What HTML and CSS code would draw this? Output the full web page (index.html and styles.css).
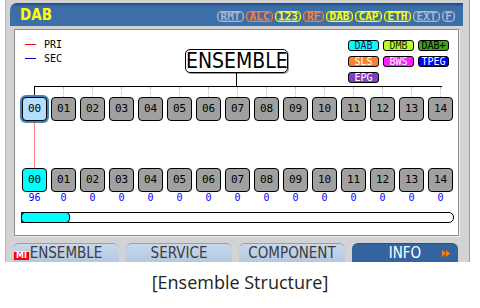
FILE: index.html
```html
<!DOCTYPE html>
<html lang="en">
<head>
    <meta charset="UTF-8">
    <meta name="viewport" content="width=device-width, initial-scale=1.0">
    <title>Ensemble Structure</title>
    <link rel="stylesheet" href="styles.css">
</head>
<body>
    <div class="device">
        <!-- Title bar with status flags -->
        <div class="titlebar">
            <span class="title">DAB</span>
            <ul class="status">
                <li class="off">RMT</li>
                <li class="warn">ALC</li>
                <li class="on w26">123</li>
                <li class="warn w21">RF</li>
                <li class="on">DAB</li>
                <li class="on">CAP</li>
                <li class="on">ETH</li>
                <li class="off">EXT</li>
                <li class="off w13">F</li>
            </ul>
        </div>

        <!-- Ensemble tree -->
        <div class="panel">
            <div class="top">
                <div class="legend">
                    <div class="legend-row"><span class="swatch pri"></span>PRI</div>
                    <div class="legend-row"><span class="swatch sec"></span>SEC</div>
                </div>
                <div class="root">
                    <div class="ensemble">ENSEMBLE</div>
                    <div class="stem"></div>
                </div>
                <div class="tags">
                    <span class="tag dab">DAB</span>
                    <span class="tag dmb">DMB</span>
                    <span class="tag dabplus">DAB+</span>
                    <span class="tag sls">SLS</span>
                    <span class="tag bws">BWS</span>
                    <span class="tag tpeg">TPEG</span>
                    <span class="tag epg">EPG</span>
                </div>
            </div>
            <div class="bus"></div>
            <div class="row">
                <div class="cell"><div class="drop first"></div><div class="box selected">00</div></div>
                <div class="cell"><div class="drop"></div><div class="box">01</div></div>
                <div class="cell"><div class="drop"></div><div class="box">02</div></div>
                <div class="cell"><div class="drop"></div><div class="box">03</div></div>
                <div class="cell"><div class="drop"></div><div class="box">04</div></div>
                <div class="cell"><div class="drop"></div><div class="box">05</div></div>
                <div class="cell"><div class="drop"></div><div class="box">06</div></div>
                <div class="cell"><div class="drop"></div><div class="box">07</div></div>
                <div class="cell"><div class="drop"></div><div class="box">08</div></div>
                <div class="cell"><div class="drop"></div><div class="box">09</div></div>
                <div class="cell"><div class="drop"></div><div class="box">10</div></div>
                <div class="cell"><div class="drop"></div><div class="box">11</div></div>
                <div class="cell"><div class="drop"></div><div class="box">12</div></div>
                <div class="cell"><div class="drop"></div><div class="box">13</div></div>
                <div class="cell"><div class="drop"></div><div class="box">14</div></div>
            </div>
            <div class="link"><span></span></div>
            <div class="row">
                <div class="box active">00</div>
                <div class="box">01</div>
                <div class="box">02</div>
                <div class="box">03</div>
                <div class="box">04</div>
                <div class="box">05</div>
                <div class="box">06</div>
                <div class="box">07</div>
                <div class="box">08</div>
                <div class="box">09</div>
                <div class="box">10</div>
                <div class="box">11</div>
                <div class="box">12</div>
                <div class="box">13</div>
                <div class="box">14</div>
            </div>
            <div class="row counts">
                <span>96</span><span>0</span><span>0</span><span>0</span><span>0</span>
                <span>0</span><span>0</span><span>0</span><span>0</span><span>0</span>
                <span>0</span><span>0</span><span>0</span><span>0</span><span>0</span>
            </div>
            <div class="scroll"><div class="thumb"></div></div>
        </div>

        <!-- Bottom tabs -->
        <div class="tabs">
            <div class="tab"><span class="mi">MI</span>ENSEMBLE</div>
            <div class="tab">SERVICE</div>
            <div class="tab">COMPONENT</div>
            <div class="tab current">INFO
                <svg class="arrow" width="8" height="7" viewBox="0 0 8 7">
                    <polygon points="0,0 4,3.5 0,7" fill="#ff8000"/>
                    <polygon points="4,0 8,3.5 4,7" fill="#ff8000"/>
                </svg>
            </div>
        </div>
    </div>

    <p class="caption">[Ensemble Structure]</p>
</body>
</html>
```

FILE: styles.css
```css
* {
    margin: 0;
    padding: 0;
    box-sizing: border-box;
}

body {
    width: 480px;
    height: 308px;
    overflow: hidden;
    background-color: #fff;
    font-family: "DejaVu Sans Mono", monospace;
}

.device {
    margin-left: 5px;
    width: 465px;
    height: 262px;
    padding: 3px 0 0 4px;
    background-color: #d3d3d3;
    border-left: 1px solid #b8b8b8;
    border-right: 1px solid #9c9c9c;
}

/* Title bar */
.titlebar {
    display: flex;
    align-items: center;
    width: 453px;
    height: 23px;
    padding-left: 10px;
    border-radius: 7px 0 0 0;
    background: linear-gradient(#1f4a84, #3c6ea8 4px, #3c6ea8);
}

.title {
    color: #ffff00;
    font: bold 15px "Liberation Sans Narrow", "DejaVu Sans Condensed", sans-serif;
}

.status {
    display: flex;
    gap: 2px;
    margin: 4px 8px 0 auto;
    list-style-type: none;
}

.status li {
    width: 27px;
    height: 11px;
    border: 1px solid;
    border-radius: 4px;
    box-shadow: inset 0 0 0 1px color-mix(in srgb, currentColor 35%, transparent);
    font: bold 11px/9px "DejaVu Sans Mono", monospace;
    text-align: center;
}

.status li.w26 { width: 26px; }
.status li.w21 { width: 21px; }
.status li.w13 { width: 13px; }

.status .off { color: #a8b8cc; }
.status .warn { color: #ff7f27; }
.status .on { color: #ffff00; }

/* Tree panel */
.panel {
    width: 445px;
    height: 207px;
    margin: 3px 0 0 4px;
    background-color: #fff;
    border: 1px solid #8c8c8c;
    box-shadow: 1px 1px 0 #efefef;
}

.top {
    display: grid;
    grid-template-columns: 1fr auto 1fr;
    height: 56px;
}

.legend {
    padding: 7px 0 0 10px;
    font-size: 10px;
}

.legend-row {
    display: flex;
    align-items: center;
    gap: 8px;
    height: 14px;
}

.swatch {
    width: 11px;
    height: 1px;
}

.swatch.pri { background-color: #ff0000; }
.swatch.sec { background-color: #0000cc; }

.root {
    display: flex;
    flex-direction: column;
    align-items: center;
    padding-top: 19px;
}

.ensemble {
    width: 103px;
    height: 24px;
    border: 1px solid #000;
    border-radius: 5px;
    box-shadow: 1px 1px 0 #9a9a9a;
    font: 21px/22px "Liberation Sans Narrow", "DejaVu Sans Condensed", sans-serif;
    text-align: center;
}

.stem {
    width: 1px;
    height: 13px;
    background-color: #000;
}

.tags {
    display: grid;
    grid-template-columns: repeat(3, 31px);
    gap: 5px 4px;
    align-content: start;
    justify-self: end;
    margin-right: 9px;
    padding-top: 10px;
}

.tag {
    height: 11px;
    border: 1px solid #000;
    border-radius: 3px;
    font-size: 10px;
    line-height: 9px;
    text-align: center;
    color: #fff;
}

.tag.dab { background-color: #00ffff; color: #10205a; }
.tag.dmb { background-color: #b8ff2a; color: #1a2a00; }
.tag.dabplus { background-color: #3f9f1f; color: #000; }
.tag.sls { background-color: #ff8030; }
.tag.bws { background-color: #ff1eff; }
.tag.tpeg { background-color: #0000ff; }
.tag.epg { background-color: #8040c0; }

.bus {
    width: 408px;
    height: 1px;
    margin-left: 19px;
    background-color: #000;
}

.row {
    display: grid;
    grid-template-columns: repeat(15, 25px);
    column-gap: 4px;
    margin-left: 7px;
}

.drop {
    width: 1px;
    height: 10px;
    margin: 0 auto;
    border-left: 1px dotted #b4b4b4;
}

.drop.first {
    border-left: 1px solid #000;
}

.box {
    height: 24px;
    border: 1px solid #000;
    border-radius: 4px;
    background-color: #a0a0a0;
    font-size: 11px;
    line-height: 22px;
    text-align: center;
}

.box.selected {
    background-color: #b3e0ff;
    box-shadow: 0 0 0 2px #4682b8;
}

.box.active {
    background-color: #00ffff;
}

.link {
    height: 47px;
}

.link span {
    display: block;
    width: 1px;
    height: 100%;
    margin-left: 19px;
    background-color: #ff8080;
}

.counts {
    height: 12px;
    color: #0000ff;
    font-size: 10px;
    line-height: 12px;
    text-align: center;
}

.scroll {
    width: 433px;
    height: 11px;
    margin: 8px 0 0 6px;
    border: 1px solid #000;
    border-radius: 0 5px 5px 0;
}

.thumb {
    width: 49px;
    height: 11px;
    margin: -1px 0 0 -1px;
    background-color: #00ffff;
    border: 1px solid #000;
    border-radius: 4px;
}

/* Tabs */
.tabs {
    display: grid;
    grid-template-columns: repeat(4, 106px);
    column-gap: 7px;
    height: 19px;
    margin: 7px 0 0 3px;
}

.tab {
    position: relative;
    border-top: 1px solid #8aa0bc;
    border-radius: 6px 6px 0 0;
    background: linear-gradient(#c8d8ec, #b4c8e0);
    color: #3c3c3c;
    font: 15px/18px "Liberation Sans Narrow", "DejaVu Sans Condensed", sans-serif;
    text-align: center;
}

.tab.current {
    background: #3464a0;
    border-top-color: #27508a;
    color: #fff;
}

.mi {
    position: absolute;
    left: 1px;
    bottom: 2px;
    height: 8px;
    padding: 0 2px;
    background-color: #ff0000;
    color: #fff;
    font: bold 8px/8px "DejaVu Sans", sans-serif;
}

.arrow {
    position: absolute;
    right: 8px;
    top: 6px;
}

.caption {
    margin-top: 8px;
    color: #222;
    font: 18px "Open Sans", sans-serif;
    text-align: center;
}
```
